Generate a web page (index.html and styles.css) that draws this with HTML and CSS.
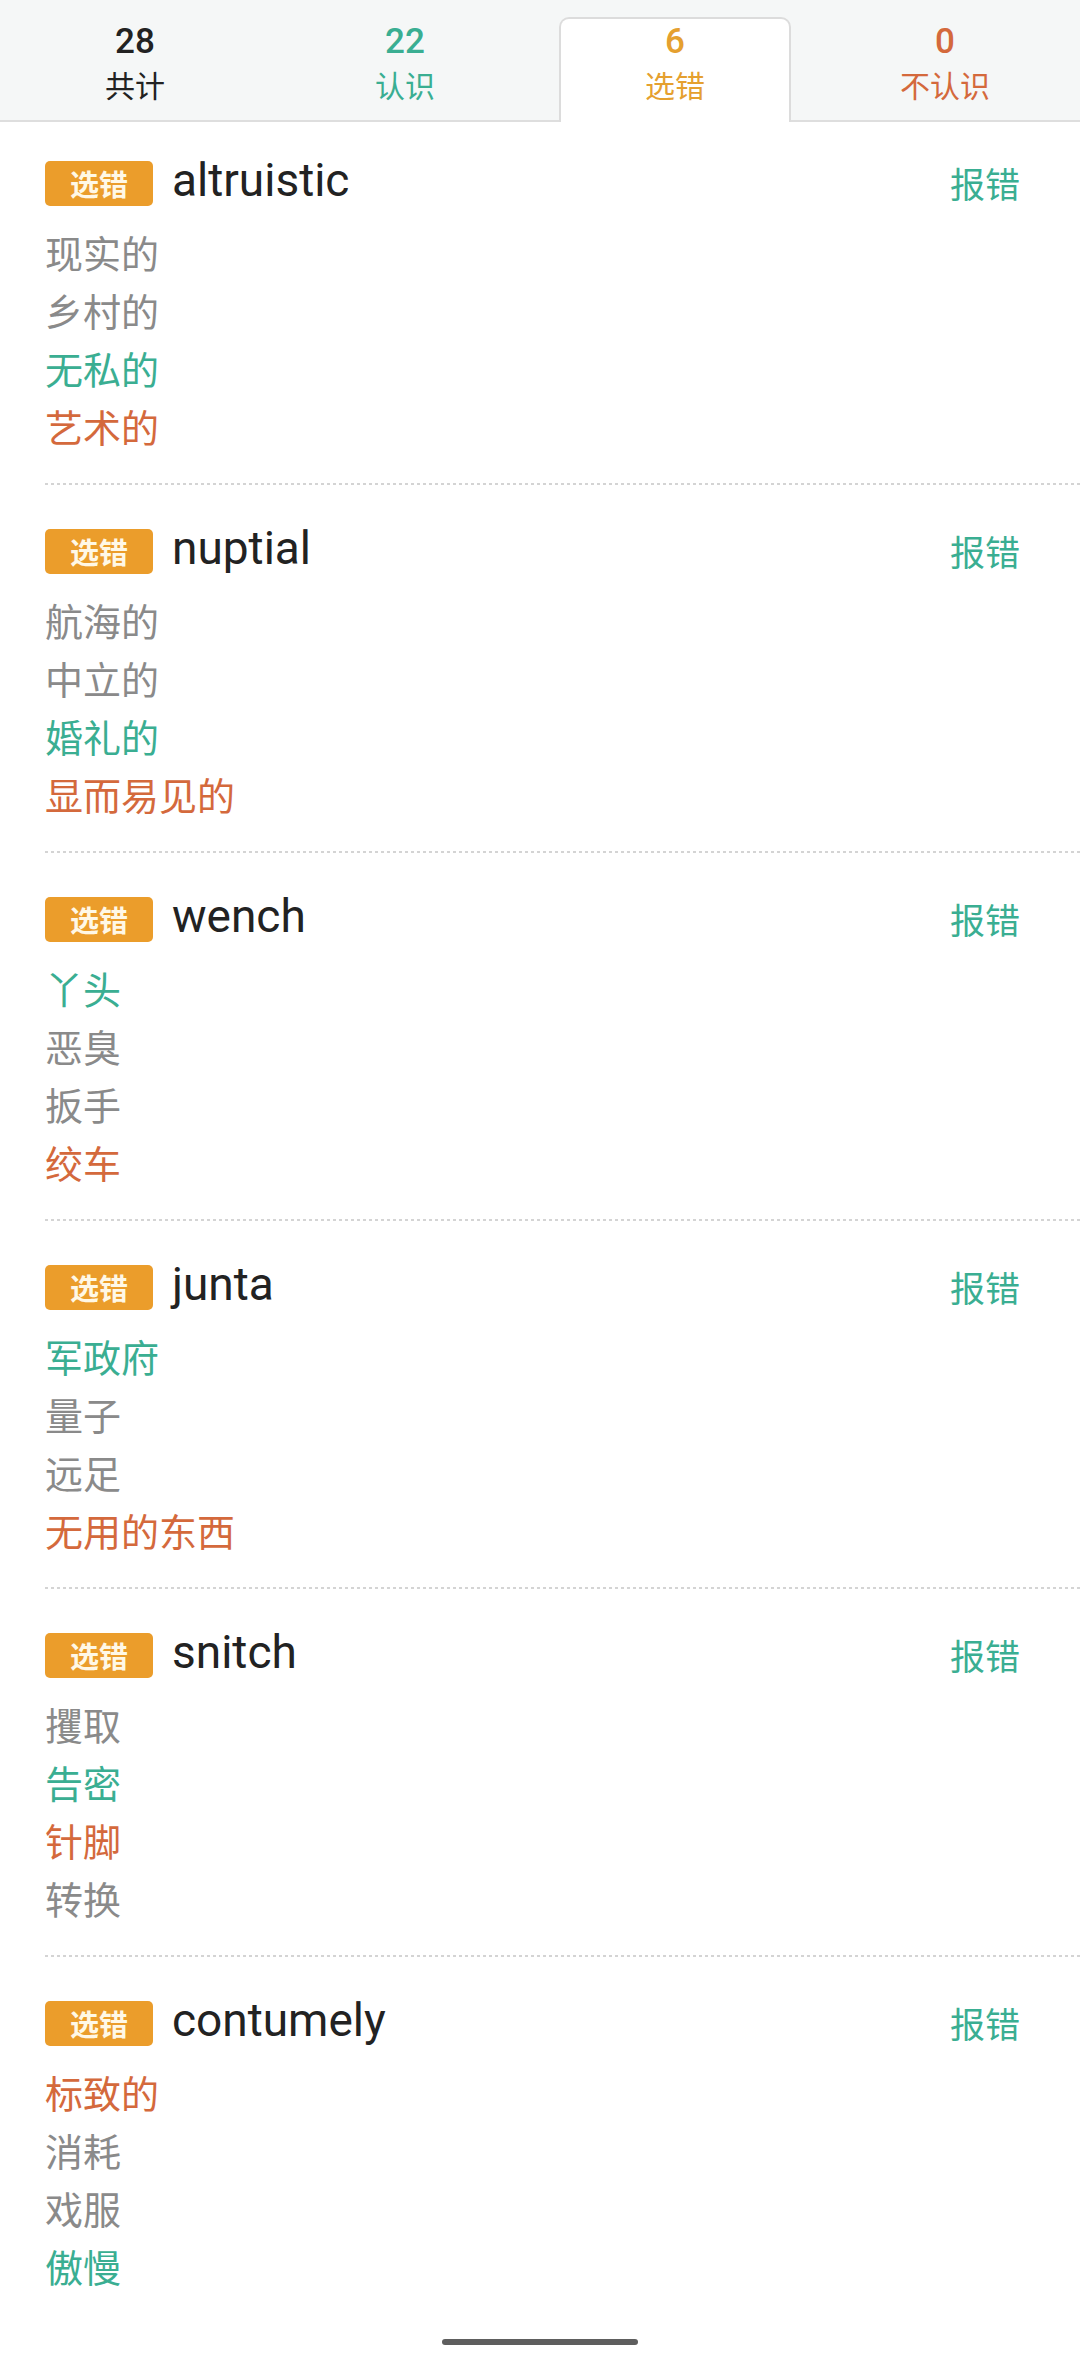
FILE: index.html
```html
<!DOCTYPE html>
<html lang="zh-CN">
<head>
<meta charset="utf-8">
<title>选错</title>
<link rel="stylesheet" href="styles.css">
</head>
<body>
<div class="tabs">
  <div class="cell"><div class="tab"><div class="num c-black">28</div><div class="lbl c-black">共计</div></div></div>
  <div class="cell"><div class="tab"><div class="num c-green">22</div><div class="lbl c-green">认识</div></div></div>
  <div class="cell"><div class="tab active"><div class="num c-orange">6</div><div class="lbl c-orange">选错</div></div></div>
  <div class="cell"><div class="tab"><div class="num c-red">0</div><div class="lbl c-red">不认识</div></div></div>
</div>

<div class="list">
  <div class="card">
    <div class="head"><span class="badge">选错</span><span class="word">altruistic</span><span class="report">报错</span></div>
    <div class="opt">现实的</div><div class="opt">乡村的</div><div class="opt ok">无私的</div><div class="opt bad">艺术的</div>
  </div>
  <div class="card">
    <div class="head"><span class="badge">选错</span><span class="word">nuptial</span><span class="report">报错</span></div>
    <div class="opt">航海的</div><div class="opt">中立的</div><div class="opt ok">婚礼的</div><div class="opt bad">显而易见的</div>
  </div>
  <div class="card">
    <div class="head"><span class="badge">选错</span><span class="word">wench</span><span class="report">报错</span></div>
    <div class="opt ok">丫头</div><div class="opt">恶臭</div><div class="opt">扳手</div><div class="opt bad">绞车</div>
  </div>
  <div class="card">
    <div class="head"><span class="badge">选错</span><span class="word">junta</span><span class="report">报错</span></div>
    <div class="opt ok">军政府</div><div class="opt">量子</div><div class="opt">远足</div><div class="opt bad">无用的东西</div>
  </div>
  <div class="card">
    <div class="head"><span class="badge">选错</span><span class="word">snitch</span><span class="report">报错</span></div>
    <div class="opt">攫取</div><div class="opt ok">告密</div><div class="opt bad">针脚</div><div class="opt">转换</div>
  </div>
  <div class="card last">
    <div class="head"><span class="badge">选错</span><span class="word">contumely</span><span class="report">报错</span></div>
    <div class="opt bad">标致的</div><div class="opt">消耗</div><div class="opt">戏服</div><div class="opt ok">傲慢</div>
  </div>
</div>

<div class="homebar"></div>
</body>
</html>
```

FILE: styles.css
```css
* { box-sizing: border-box; }
html, body {
  margin: 0;
  padding: 0;
  background: #ffffff;
}
body {
  width: 1080px;
  height: 2362px;
  overflow: hidden;
  position: relative;
  font-family: Roboto, "Noto Sans CJK SC", sans-serif;
}

.c-black { color: #222222; }
.c-green { color: #3aae92; }
.c-orange { color: #e5a02f; }
.c-red { color: #d4693c; }

.tabs {
  display: grid;
  grid-template-columns: repeat(4, 1fr);
  height: 122px;
  background: #f5f7f7;
  border-bottom: 2px solid #dedede;
}
.cell {
  display: flex;
  flex-direction: column;
}
.tab {
  margin: 17px 19px -2px;
  height: 105px;
  border: 2px solid transparent;
  border-bottom: none;
  border-radius: 10px 10px 0 0;
  padding-top: 1px;
  display: flex;
  flex-direction: column;
  align-items: center;
}
.tab.active {
  background: #ffffff;
  border-color: #dcdcdc;
}
.num {
  font-family: Roboto, sans-serif;
  font-weight: 500;
  font-size: 35px;
  line-height: 44px;
}
.lbl {
  font-family: "Noto Sans CJK SC", sans-serif;
  font-size: 30px;
  line-height: 40px;
}

.list {
  padding-left: 45px;
}
.card {
  padding: 31px 60px 30px 0;
  background-image: repeating-linear-gradient(90deg, #d4d4d4 0 3px, transparent 3px 6px);
  background-size: 100% 2px;
  background-position: left bottom;
  background-repeat: no-repeat;
}
.card + .card { padding-top: 36px; }
.card.last { background-image: none; }

.head {
  display: flex;
  align-items: center;
  height: 60px;
  margin-bottom: 10px;
}
.badge {
  width: 108px;
  height: 45px;
  border-radius: 5px;
  background: #eb9d2b;
  color: #fff8e6;
  font-family: "Noto Sans CJK SC", sans-serif;
  font-weight: 700;
  font-size: 29px;
  line-height: 45px;
  text-align: center;
  flex: none;
}
.word {
  margin-left: 19px;
  font-family: Roboto, sans-serif;
  font-size: 46px;
  color: #222222;
  flex: 1;
  line-height: 56px;
  padding-bottom: 6px;
}
.report {
  font-family: "Noto Sans CJK SC", sans-serif;
  font-size: 35px;
  color: #3aae92;
  line-height: 50px;
}
.opt {
  font-family: "Noto Sans CJK SC", sans-serif;
  font-size: 38px;
  line-height: 58px;
  height: 58px;
  color: #8a8a8a;
}
.opt.ok { color: #3aae92; }
.opt.bad { color: #d4693c; }

.homebar {
  position: absolute;
  left: 442px;
  top: 2339px;
  width: 196px;
  height: 6px;
  border-radius: 3px;
  background: #5e5e5e;
}
```
